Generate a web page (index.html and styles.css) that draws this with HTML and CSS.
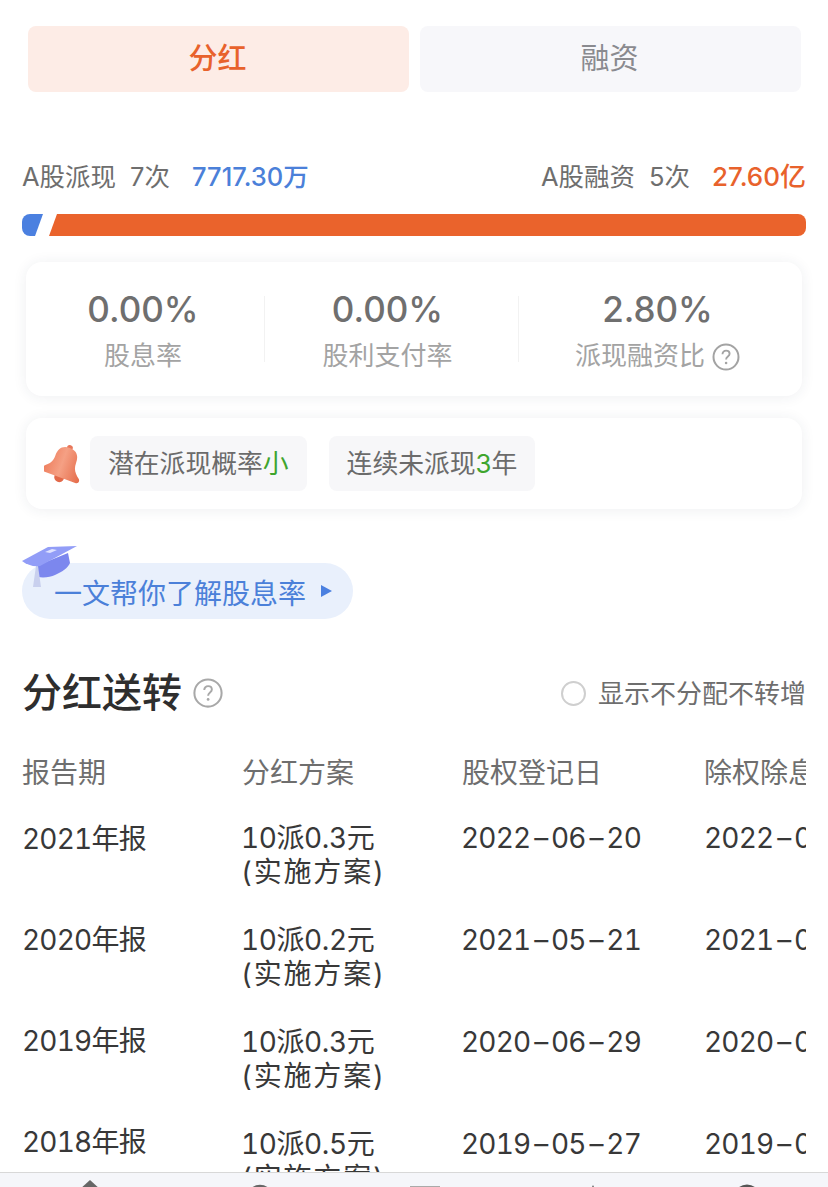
FILE: index.html
```html
<!DOCTYPE html>
<html lang="zh">
<head>
<meta charset="utf-8">
<title>分红融资</title>
<link rel="stylesheet" href="styles.css">
</head>
<body>
<main class="page">
  <div class="tabs">
    <div class="tab tab-active">分红</div>
    <div class="tab">融资</div>
  </div>

  <div class="summary">
    <div class="sum-group"><span>A股派现</span><span class="sum-count">7次</span><span class="sum-blue">7717.30万</span></div>
    <div class="sum-group"><span>A股融资</span><span class="sum-count">5次</span><span class="sum-orange">27.60亿</span></div>
  </div>

  <div class="bar">
    <div class="bar-blue"></div>
    <div class="bar-orange"></div>
  </div>

  <section class="card stats">
    <div class="stat stat-a"><div class="stat-value">0.00%</div><div class="stat-label">股息率</div></div>
    <div class="stat stat-b"><div class="stat-value">0.00%</div><div class="stat-label">股利支付率</div></div>
    <div class="stat stat-c"><div class="stat-value">2.80%</div><div class="stat-label">派现融资比<svg class="help" viewBox="0 0 28 28"><circle cx="14" cy="14" r="12.5" fill="none" stroke="#a3a3a3" stroke-width="2"/><path d="M10.5 11.2c0-2.200 1.600-3.600 3.600-3.600s3.500 1.300 3.500 3.200c0 2.800-3.500 2.800-3.500 5.700" fill="none" stroke="#a3a3a3" stroke-width="1.900"/><circle cx="14.100" cy="20" r="1.300" fill="#a3a3a3"/></svg></div></div>
  </section>

  <section class="card notes">
    <svg class="bell" viewBox="0 0 40 44">
      <defs><linearGradient id="bellg" x1="0" y1="0" x2="1" y2="0"><stop offset="0" stop-color="#ee7d5c"/><stop offset="0.450" stop-color="#f5a084"/><stop offset="1" stop-color="#e56c4a"/></linearGradient></defs>
      <g transform="rotate(20 20 22)">
        <circle cx="20" cy="5" r="3" fill="#e8775a"/>
        <circle cx="20" cy="36" r="5" fill="#e2694a"/>
        <path d="M20 5c-8 0-11 5-11 12 0 7-3 10-8 14-2 2-1 5 2 5h34c3 0 4-3 2-5-5-4-8-7-8-14 0-7-3-12-11-12z" fill="url(#bellg)"/>
      </g>
    </svg>
    <div class="chip">潜在派现概率<span class="green">小</span></div>
    <div class="chip">连续未派现<span class="green">3</span>年</div>
  </section>

  <div class="pill">
    <svg class="cap" viewBox="0 0 56 46">
      <path d="M14 24l2 11c6 1 13 0 17-2 7-3 13-7 15-12l-2-10z" fill="#7c87ee"/>
      <path d="M14 24l-3 21h8l-3-21z" fill="#c9d0ee"/>
      <path d="M0 19L26 5 55 4 18 24c-6 1-13-1-18-5z" fill="#929df7"/>
      <path d="M23 10l7-3 5 1-7 3z" fill="#dfe3ff"/>
    </svg>
    <span class="pill-text">一文帮你了解股息率</span>
    <span class="pill-arrow"></span>
  </div>

  <div class="section-head">
    <div class="section-title">
      <h2>分红送转</h2>
      <svg class="help help-lg" viewBox="0 0 28 28"><circle cx="14" cy="14" r="12.700" fill="none" stroke="#a8a8a8" stroke-width="1.900"/><path d="M10.500 11.200c0-2.200 1.600-3.600 3.600-3.600s3.500 1.300 3.500 3.200c0 2.800-3.500 2.800-3.500 5.700" fill="none" stroke="#a8a8a8" stroke-width="1.800"/><circle cx="14.100" cy="20" r="1.300" fill="#a8a8a8"/></svg>
    </div>
    <div class="toggle"><span class="radio"></span><span class="toggle-text">显示不分配不转增</span></div>
  </div>

  <div class="table">
    <div class="col col-period">
      <div class="th">报告期</div>
      <div class="td">2021年报</div>
      <div class="td">2020年报</div>
      <div class="td">2019年报</div>
      <div class="td">2018年报</div>
    </div>
    <div class="col col-plan">
      <div class="th">分红方案</div>
      <div class="td">10派0.3元<br><span class="note">(实施方案)</span></div>
      <div class="td">10派0.2元<br><span class="note">(实施方案)</span></div>
      <div class="td">10派0.3元<br><span class="note">(实施方案)</span></div>
      <div class="td">10派0.5元<br><span class="note">(实施方案)</span></div>
    </div>
    <div class="col col-reg">
      <div class="th">股权登记日</div>
      <div class="td">2022<span class="dash">–</span>06<span class="dash">–</span>20</div>
      <div class="td">2021<span class="dash">–</span>05<span class="dash">–</span>21</div>
      <div class="td">2020<span class="dash">–</span>06<span class="dash">–</span>29</div>
      <div class="td">2019<span class="dash">–</span>05<span class="dash">–</span>27</div>
    </div>
    <div class="col col-ex">
      <div class="th">除权除息日</div>
      <div class="td">2022<span class="dash">–</span>06<span class="dash">–</span>21</div>
      <div class="td">2021<span class="dash">–</span>05<span class="dash">–</span>24</div>
      <div class="td">2020<span class="dash">–</span>06<span class="dash">–</span>30</div>
      <div class="td">2019<span class="dash">–</span>05<span class="dash">–</span>28</div>
    </div>
  </div>
</main>

<nav class="tabbar">
  <svg class="nav-icon" viewBox="0 0 40 20"><path d="M20 7L31 17H9z" fill="#666"/></svg>
  <svg class="nav-icon" viewBox="0 0 40 20"><circle cx="20" cy="25" r="12" fill="none" stroke="#666" stroke-width="2.500"/></svg>
  <svg class="nav-icon" viewBox="0 0 40 20"><path d="M5 14h30" stroke="#aaa" stroke-width="2"/></svg>
  <svg class="nav-icon" viewBox="0 0 40 20"><path d="M20 12l-2 4h4z" fill="#666"/></svg>
  <svg class="nav-icon" viewBox="0 0 40 20"><circle cx="20" cy="25" r="12" fill="none" stroke="#555" stroke-width="3"/></svg>
</nav>
</body>
</html>
```

FILE: styles.css
```css
* { box-sizing: border-box; }

html, body {
  margin: 0;
  height: 1187px;
  overflow: hidden;
  background: #fff;
}

body {
  font-family: "Inter", "Noto Sans CJK SC", sans-serif;
  color: #333;
}

.page {
  height: 1187px;
  padding: 26px 22px 0;
  overflow: hidden;
}

.tabs {
  display: flex;
  gap: 11px;
  margin: 0 5px 0 6px;
}

.tab {
  flex: 1;
  height: 66px;
  border-radius: 8px;
  background: #f7f7fa;
  color: #8a8a8f;
  font-size: 29px;
  line-height: 66px;
  text-align: center;
  padding-right: 2px;
}

.tab-active {
  background: #fdece6;
  color: #e8622c;
  font-weight: 500;
}

.summary {
  display: flex;
  justify-content: space-between;
  margin-top: 65px;
  height: 40px;
  line-height: 40px;
  font-size: 25.500px;
  color: #6e6e6e;
}

.sum-group {
  display: flex;
}

.sum-count { margin-left: 14px; }

.sum-blue {
  margin-left: 22px;
  color: #4b80d9;
  font-weight: 500;
}

.sum-orange {
  margin-left: 22px;
  color: #e8622c;
  font-weight: 500;
  font-size: 26px;
}

.bar {
  display: flex;
  margin-top: 17px;
  height: 22px;
  gap: 6px;
}

.bar-blue {
  width: 21px;
  background: #4b80e0;
  border-radius: 8px 0 0 8px;
  clip-path: polygon(0 0, 100% 0, 62% 100%, 0 100%);
}

.bar-orange {
  flex: 1;
  background: #ea632c;
  border-radius: 0 8px 8px 0;
  clip-path: polygon(8px 0, 100% 0, 100% 100%, 0 100%);
}

.card {
  background: #fff;
  border-radius: 16px;
  margin: 0 4px;
  box-shadow: 0 1px 14px rgba(40, 50, 80, 0.08);
}

.stats {
  display: flex;
  height: 134px;
  margin-top: 26px;
  align-items: center;
}

.stat {
  text-align: center;
  height: 66px;
}

.stat-a { width: 238px; padding-right: 4px; }
.stat-b { width: 254px; padding-right: 8px; border-left: 1px solid #f2f2f2; }
.stat-c { flex: 1; padding-right: 6px; border-left: 1px solid #f2f2f2; }

.stat-value {
  font-size: 35px;
  line-height: 40px;
  margin-top: -7px;
  font-weight: 500;
  color: #6f6f6f;
}

.stat-label {
  margin-top: 9px;
  font-size: 26px;
  line-height: 36px;
  color: #a3a3a3;
  display: flex;
  justify-content: center;
  align-items: center;
}

.help {
  width: 28px;
  height: 28px;
  margin-left: 6px;
}

.stat-c .help { margin-top: 2px; margin-left: 7px; }

.notes {
  display: flex;
  align-items: center;
  height: 91px;
  margin-top: 22px;
  padding-left: 18px;
}

.bell {
  width: 40px;
  height: 44px;
  margin-right: 6px;
}

.chip {
  height: 55px;
  line-height: 55px;
  padding: 0 18px;
  margin-right: 22px;
  background: #f7f7f9;
  border-radius: 8px;
  font-size: 25.800px;
  color: #6b6b6b;
}

.green { color: #3fa52e; }

.pill {
  position: relative;
  display: flex;
  align-items: center;
  width: 331px;
  height: 56px;
  margin-top: 54px;
  padding-left: 32px;
  background: #e9f0fc;
  border-radius: 28px;
  color: #4b80d9;
  font-size: 28px;
}

.pill-text {
  line-height: 56px;
  margin-top: 5px;
}

.cap {
  position: absolute;
  left: 0;
  top: -21px;
  width: 56px;
  height: 46px;
}

.pill-arrow {
  width: 0;
  height: 0;
  margin-left: 15px;
  border-left: 11px solid #4b80e0;
  border-top: 6px solid transparent;
  border-bottom: 6px solid transparent;
}

.section-head {
  display: flex;
  justify-content: space-between;
  align-items: center;
  margin-top: 44px;
  height: 60px;
}

.section-title {
  display: flex;
  align-items: center;
}

.section-title h2 {
  margin: 0;
  font-size: 40px;
  line-height: 60px;
  font-weight: 500;
  color: #2e2e2e;
}

.help-lg {
  margin-left: 11px;
  width: 30px;
  height: 30px;
}

.toggle {
  display: flex;
  align-items: center;
  font-size: 26px;
  color: #6e6e6e;
}

.toggle-text { margin-bottom: 4px; }

.radio {
  width: 25px;
  height: 25px;
  margin-right: 12px;
  border: 2px solid #cfcfcf;
  border-radius: 50%;
}

.table {
  display: flex;
  margin-top: 30px;
  width: 784px;
  overflow: hidden;
}

.col { flex: none; }
.col-period { width: 219px; }
.col-plan { width: 220px; }
.col-reg { width: 243px; }
.col-ex { width: 240px; }

.th {
  height: 64px;
  font-size: 28px;
  line-height: 40px;
  color: #6e6e6e;
  white-space: nowrap;
}

.col-plan .th,
.col-reg .th { padding-left: 1px; }

.td {
  height: 102px;
  padding-top: 4px;
  font-size: 28px;
  line-height: 34px;
  color: #383838;
  white-space: nowrap;
  font-variant-numeric: tabular-nums;
  letter-spacing: -0.800px;
}

.dash { margin: 0 3.700px; }

.col-period .td { height: 101px; padding-top: 5px; }

.col-plan .td { letter-spacing: -0.400px; }

.col-plan .td .note { letter-spacing: 1.800px; }

.tabbar {
  position: fixed;
  left: 0;
  right: 0;
  bottom: 0;
  height: 15px;
  padding-left: 70px;
  display: grid;
  grid-template-columns: 170px 165px 168px 154px 40px;
  background: #f5f6fa;
  border-top: 1px solid #d8d8d8;
  overflow: hidden;
}

.nav-icon {
  width: 40px;
  height: 20px;
}
```
